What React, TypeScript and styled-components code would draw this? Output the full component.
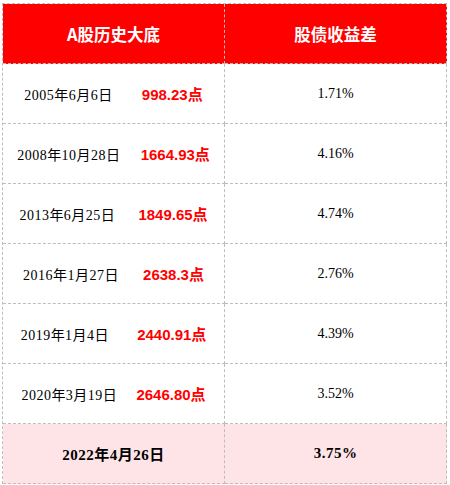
import React from 'react'
import styled, { createGlobalStyle } from 'styled-components'

const GlobalStyle = createGlobalStyle`
  html, body {
    margin: 0;
    padding: 0;
    background: #ffffff;
  }
`

interface Row {
  date: string
  point: string
  spread: string
  gap: number
}

const rows: Row[] = [
  { date: '2005年6月6日', point: '998.23点', spread: '1.71%', gap: 29 },
  { date: '2008年10月28日', point: '1664.93点', spread: '4.16%', gap: 20 },
  { date: '2013年6月25日', point: '1849.65点', spread: '4.74%', gap: 23 },
  { date: '2016年1月27日', point: '2638.3点', spread: '2.76%', gap: 24 },
  { date: '2019年1月4日', point: '2440.91点', spread: '4.39%', gap: 28 },
  { date: '2020年3月19日', point: '2646.80点', spread: '3.52%', gap: 19 },
]

const Page = styled.div`
  padding: 3px 0 0 2px;
`

const Sheet = styled.div`
  display: grid;
  grid-template-columns: 222px 222px;
  grid-auto-rows: 60px;
  width: max-content;
  border-top: 1px dashed #bdbdbd;
  border-left: 1px dashed #bdbdbd;
`

const Cell = styled.div<{ $tone?: 'head' | 'pink' }>`
  display: flex;
  align-items: center;
  justify-content: center;
  border-right: 1px dashed #bdbdbd;
  border-bottom: 1px dashed #bdbdbd;
  background: ${(p) =>
    p.$tone === 'head' ? '#ff0000' : p.$tone === 'pink' ? '#ffe4e7' : '#ffffff'};
  color: #000000;
  font-family: 'Liberation Serif', 'Noto Sans CJK SC', serif;
  font-size: 14px;
  white-space: nowrap;
`

const HeadText = styled.span`
  color: #ffffff;
  font-family: 'Noto Sans CJK SC', sans-serif;
  font-weight: 700;
  font-size: 16.5px;
`

const DateText = styled.span<{ $bold?: boolean }>`
  font-weight: ${(p) => (p.$bold ? 700 : 400)};
  font-size: ${(p) => (p.$bold ? 15 : 14)}px;
  letter-spacing: 0.5px;
`

const PointText = styled.span<{ $gap: number }>`
  margin-left: ${(p) => p.$gap}px;
  color: #ff0000;
  font-family: 'Liberation Sans', 'Noto Sans CJK SC', sans-serif;
  font-weight: 700;
  font-size: 15px;
`

const App: React.FC = () => {
  return (
    <Page>
      <GlobalStyle />
      <Sheet>
        <Cell $tone="head">
          <HeadText>A股历史大底</HeadText>
        </Cell>
        <Cell $tone="head">
          <HeadText>股债收益差</HeadText>
        </Cell>

        {rows.map((r) => (
          <React.Fragment key={r.date}>
            <Cell>
              <DateText>{r.date}</DateText>
              <PointText $gap={r.gap}>{r.point}</PointText>
            </Cell>
            <Cell>{r.spread}</Cell>
          </React.Fragment>
        ))}

        <Cell $tone="pink">
          <DateText $bold>2022年4月26日</DateText>
        </Cell>
        <Cell $tone="pink">
          <DateText $bold>3.75%</DateText>
        </Cell>
      </Sheet>
    </Page>
  )
}

export default App
